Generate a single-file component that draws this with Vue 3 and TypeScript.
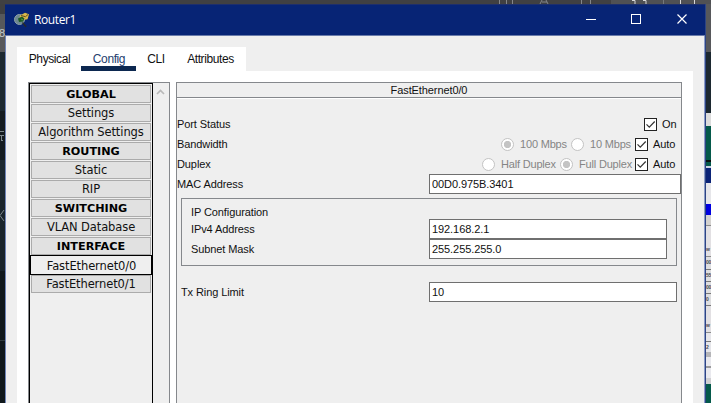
<script setup lang="ts">
import { ref } from 'vue'

interface MenuItem {
  label: string
  heading?: boolean
}

interface Block {
  h: number
  color: string
  text?: string
  icon?: string
}

const tabs: string[] = ['Physical', 'Config', 'CLI', 'Attributes']
const activeTab = ref('Config')

const menu: MenuItem[] = [
  { label: 'GLOBAL', heading: true },
  { label: 'Settings' },
  { label: 'Algorithm Settings' },
  { label: 'ROUTING', heading: true },
  { label: 'Static' },
  { label: 'RIP' },
  { label: 'SWITCHING', heading: true },
  { label: 'VLAN Database' },
  { label: 'INTERFACE', heading: true },
  { label: 'FastEthernet0/0' },
  { label: 'FastEthernet0/1' },
]
const selected = ref('FastEthernet0/0')

const mac = ref('00D0.975B.3401')
const ipv4 = ref('192.168.2.1')
const mask = ref('255.255.255.0')
const txRing = ref('10')

const leftBlocks: Block[] = [
  { h: 10, color: '#3f3f41' },
  { h: 38, color: '#57585b', text: '8' },
  { h: 59, color: '#1c2830' },
  { h: 49, color: '#141b20', icon: 'M0 20.5H4M0 24.500H4M1 29.500H3M1.500 25V29' },
  { h: 40, color: '#1c2830' },
  { h: 71, color: '#19242b', icon: 'M4 10L0 15.500L4 21' },
  { h: 69, color: '#10181c' },
  { h: 1, color: '#303a3e' },
  { h: 62, color: '#10181c' },
]

const rightBlocks: Block[] = [
  { h: 48, color: '#57585b' },
  { h: 61, color: '#1c2830' },
  { h: 13, color: '#dcdcdc' },
  { h: 34, color: '#04594a' },
  { h: 2, color: '#06100e' },
  { h: 4, color: '#04594a' },
  { h: 2, color: '#c9d3e4' },
  { h: 15, color: '#0b2377' },
  { h: 21, color: '#e6e6ea' },
  { h: 11, color: '#0000e0' },
  { h: 10, color: '#d4d2d0' },
  { h: 1, color: '#8b8b8b' },
  { h: 18, color: '#e2e0e3' },
  { h: 12, color: '#e2e0e3', text: 'w' },
  { h: 1, color: '#8b8b8b' },
  { h: 12, color: '#dedee0', text: '00' },
  { h: 1, color: '#777' },
  { h: 11, color: '#dedee0', text: '55' },
  { h: 1, color: '#777' },
  { h: 11, color: '#dedee0', text: '00' },
  { h: 1, color: '#777' },
  { h: 11, color: '#dedee0', text: '0' },
  { h: 1, color: '#777' },
  { h: 14, color: '#e2e0e3' },
  { h: 12, color: '#e2e0e3', text: 'w' },
  { h: 1, color: '#8b8b8b' },
  { h: 8, color: '#e6e6ea' },
  { h: 1, color: '#777' },
  { h: 10, color: '#e6e6ea', text: '2' },
  { h: 5, color: '#b5b5b8' },
  { h: 9, color: '#e9e9ee' },
  { h: 2, color: '#9a9a9c' },
  { h: 10, color: '#e9e9ee' },
  { h: 6, color: '#cfcfd2' },
  { h: 30, color: '#04594a' },
]
</script>

<template>
  <div class="desktop">
    <div class="topstrip">
      <svg width="711" height="4" viewBox="0 0 711 4">
        <rect x="611" y="0" width="100" height="4" fill="#505154" />
        <path d="M499.5 0V4M506.5 0V4M512.5 0V4M540 4l2-4M548 4l-2-4M542 2h5M581.500 0V4M590.500 0V4" stroke="#85878a" fill="none" />
        <path d="M632 .5h3v3.500M643 .5h3v3.500M680.500 0V4M694.500 0V4" stroke="#d8d8d8" fill="none" />
        <path d="M663.500 0V4" stroke="#77797c" />
      </svg>
    </div>
    <div class="middle">
      <div class="strip left">
        <div v-for="(b, i) in leftBlocks" :key="i" class="block" :style="{ height: b.h + 'px', background: b.color }">
          <svg v-if="b.icon" width="5" height="40" viewBox="0 0 5 40"><path :d="b.icon" fill="none" stroke="#7d878c" /></svg>
          <span v-else-if="b.text">{{ b.text }}</span>
        </div>
      </div>

      <div class="window">
        <header class="titlebar">
          <svg class="logo" width="17" height="16" viewBox="0 0 17 16">
            <circle cx="6.500" cy="7.500" r="5" fill="#6d8790" stroke="#8fa3a8" />
            <path d="M7 3.500 12 .8l4 1.400-1.500 5L10 8 6.500 5.500z" fill="#d9b84a" />
            <path d="M8 3.500l4.500 1.200L15 2.500" fill="none" stroke="#5e4a1c" />
            <path d="M5 6.500l4-2 2.500 2-1.500 3L6 10z" fill="#1c5a24" />
            <path d="M8 6.500l2 .8-1 1.500z" fill="#63a540" />
            <path d="M9.500 10.500l3.500 4.300" stroke="#252a2c" stroke-width="1.600" />
          </svg>
          <span class="title">Router1</span>
          <svg class="controls" width="110" height="31" viewBox="0 0 110 31" shape-rendering="crispEdges">
            <path d="M5 14.500h10M50.500 9.500h9v9h-9z" fill="none" stroke="#fff" />
            <path d="M96.500 9.500l9 9M105.500 9.500l-9 9" stroke="#fff" stroke-width="1.200" shape-rendering="auto" />
          </svg>
        </header>

        <div class="body">
          <nav class="tabs">
            <button v-for="t in tabs" :key="t" :class="['tab', t.toLowerCase(), { active: t === activeTab }]" @click="activeTab = t">
              <span>{{ t }}</span>
            </button>
          </nav>

          <main class="content">
            <aside class="sidebar">
              <div class="menu">
                <button
                  v-for="m in menu"
                  :key="m.label"
                  :class="['item', { heading: m.heading, selected: m.label === selected }]"
                  @click="selected = m.label"
                >{{ m.label }}</button>
              </div>
              <div class="scroll">
                <svg width="9" height="6" viewBox="0 0 9 6"><path d="M1 5l3.500-3.500L8 5" fill="none" stroke="#b9b9b9" stroke-width="1.700" /></svg>
              </div>
            </aside>

            <section class="panel">
              <h1 class="heading-bar">FastEthernet0/0</h1>
              <div class="rows">
                <div class="row">
                  <label>Port Status</label>
                  <div class="opts">
                    <i class="check"><svg width="11" height="11" viewBox="0 0 11 11"><path d="M1.500 5.300l2.800 2.900L9.700 2.500" /></svg></i>
                    <span class="on">On</span>
                  </div>
                </div>
                <div class="row">
                  <label>Bandwidth</label>
                  <div class="opts">
                    <i class="radio picked"></i><span class="off mbps100">100 Mbps</span>
                    <i class="radio"></i><span class="off mbps10">10 Mbps</span>
                    <i class="check"><svg width="11" height="11" viewBox="0 0 11 11"><path d="M1.500 5.300l2.800 2.900L9.700 2.500" /></svg></i>
                    <span class="auto">Auto</span>
                  </div>
                </div>
                <div class="row">
                  <label>Duplex</label>
                  <div class="opts">
                    <i class="radio"></i><span class="off half">Half Duplex</span>
                    <i class="radio picked"></i><span class="off full">Full Duplex</span>
                    <i class="check"><svg width="11" height="11" viewBox="0 0 11 11"><path d="M1.500 5.300l2.800 2.900L9.700 2.500" /></svg></i>
                    <span class="auto">Auto</span>
                  </div>
                </div>
                <div class="row mac">
                  <label>MAC Address</label>
                  <input v-model="mac" class="field" />
                </div>
              </div>

              <div class="group">
                <div class="legend">IP Configuration</div>
                <div class="row">
                  <label>IPv4 Address</label>
                  <input v-model="ipv4" class="field" />
                </div>
                <div class="row">
                  <label>Subnet Mask</label>
                  <input v-model="mask" class="field" />
                </div>
              </div>

              <div class="row tx">
                <label>Tx Ring Limit</label>
                <input v-model="txRing" class="field" />
              </div>
            </section>
          </main>
        </div>
      </div>

      <div class="strip right">
        <div v-for="(b, i) in rightBlocks" :key="i" class="block" :style="{ height: b.h + 'px', background: b.color }">{{ b.text }}</div>
      </div>
    </div>
  </div>
</template>

<style>
body {
  overflow: hidden;
}
</style>

<style scoped>
* {
  box-sizing: border-box;
}
.desktop {
  width: 711px;
  height: 403px;
  overflow: hidden;
  display: flex;
  flex-direction: column;
  font-family: "Liberation Sans", Arial, sans-serif;
  font-size: 11px;
  letter-spacing: -0.1px;
  color: #111;
}
.topstrip {
  height: 4px;
  background: #404042;
  display: flex;
}
.middle {
  flex: 1;
  display: flex;
  min-height: 0;
}
.strip {
  width: 5px;
  overflow: hidden;
  flex: none;
}
.block {
  overflow: hidden;
  white-space: nowrap;
}
.left .block {
  font-size: 11px;
  line-height: 38px;
  color: #c4c8ca;
  display: flex;
  justify-content: flex-end;
}
.right .block {
  font-size: 5px;
  font-weight: bold;
  line-height: 10px;
  letter-spacing: -0.3px;
  color: #4a4a4e;
}
.window {
  width: 701px;
  display: flex;
  flex-direction: column;
  border-right: 1px solid #2d4484;
}
.titlebar {
  height: 32px;
  background: #072475;
  border-top: 1px solid #1e2f6c;
  border-bottom: 1px solid #6a7cab;
  display: flex;
  align-items: center;
  color: #fff;
}
.logo {
  margin-left: 8px;
}
.title {
  margin-left: 4px;
  padding-bottom: 2px;
  flex: 1;
  font: 12px "Open Sans", "Noto Sans", sans-serif;
  letter-spacing: -0.4px;
}
.controls {
  margin-right: 14px;
}
.body {
  flex: 1;
  min-height: 0;
  background: #efefef;
  border-left: 1px solid #6f85b8;
  border-right: 1px solid #8b9cc6;
  padding: 11px 11px 0;
  display: flex;
  flex-direction: column;
}
button {
  font: inherit;
  color: inherit;
  border: 0;
  margin: 0;
  padding: 0;
}
.tabs {
  width: 229px;
  height: 24px;
  background: #fff;
  display: flex;
}
.tab {
  height: 24px;
  background: #fff;
  font-size: 12px;
  display: flex;
  justify-content: center;
  align-items: center;
  border-bottom: 5px solid #fff;
  padding: 5px 0 0 1px;
  letter-spacing: -0.4px;
  white-space: nowrap;
}
.physical { width: 64px; }
.config { width: 55px; }
.cli { width: 39px; }
.attributes { width: 70px; }
.tab.active {
  border-color: #0c2850;
  color: #24406e;
}
.content {
  flex: 1;
  min-height: 0;
  background: #fff;
  padding: 11px 11px 0;
  display: flex;
  gap: 6px;
}
.sidebar {
  width: 142px;
  border: 1px solid #85888c;
  border-bottom: 0;
  background: #efefef;
  display: flex;
}
.menu {
  width: 124px;
  border: 1px solid #000;
  border-bottom: 0;
  padding: 1px 1px 0;
  display: flex;
  flex-direction: column;
  gap: 1px;
}
.item {
  height: 18px;
  flex: none;
  border: 1px solid #ababab;
  background: #e1e1e1;
  font-family: "DejaVu Sans", Verdana, sans-serif;
  font-size: 11.5px;
  letter-spacing: -0.1px;
  line-height: 17px;
  text-align: center;
  white-space: nowrap;
}
.item.heading {
  font-weight: bold;
  font-size: 11.2px;
  letter-spacing: 0;
  color: #000;
}
.item.selected {
  height: 20px;
  margin: -1px;
  border-color: #000;
  background: #efefef;
  line-height: 20px;
  padding-left: 1px;
}
.scroll {
  flex: 1;
  display: flex;
  justify-content: center;
  padding: 6px 1px 0 0;
}
.panel {
  width: 506px;
  border: 1px solid #85888c;
  border-bottom: 0;
  background: #efefef;
}
.heading-bar {
  margin: 0;
  height: 15px;
  font-size: 11px;
  font-weight: normal;
  line-height: 14px;
  text-align: center;
  border-bottom: 1px solid #85888c;
  box-shadow: 0 1px #fff;
}
.rows {
  padding-top: 16px;
}
.row {
  height: 20px;
  display: flex;
  align-items: center;
  justify-content: space-between;
}
.opts {
  display: flex;
  align-items: center;
  white-space: nowrap;
}
.check {
  width: 13px;
  height: 13px;
  border: 1px solid #222;
  background: #fff;
  display: flex;
}
.check path {
  fill: none;
  stroke: #333;
  stroke-width: 1.2;
}
.radio {
  width: 13px;
  height: 13px;
  border: 1px solid #c3c3c3;
  border-radius: 50%;
  background: #fff;
}
.radio.picked {
  background: radial-gradient(circle, #c4c4c4 0 3.300px, #fff 4px);
}
.off {
  color: #858585;
  padding-left: 6px;
  letter-spacing: -0.18px;
}
.mbps100 { width: 57px; }
.mbps10 { width: 51px; }
.half { width: 65px; }
.full { width: 62px; }
.on {
  width: 24px;
  padding-left: 5px;
}
.auto {
  width: 33px;
  padding-left: 5px;
}
.field {
  height: 20px;
  width: 252px;
  border: 1px solid #6f6f6f;
  background: #fff;
  border-radius: 0;
  padding: 0 2px;
  margin: 0;
  outline: 0;
  font: 11px "Liberation Sans", Arial, sans-serif;
  letter-spacing: -0.08px;
  color: #111;
}
.group {
  margin: 4px 4px 0;
  height: 68px;
  border: 1px solid #85888c;
  padding: 7px 9px 0;
}
.legend {
  height: 13px;
  line-height: 12px;
}
.group .field {
  width: 238px;
}
.tx {
  margin: 16px 4px 0;
}
.tx .field {
  width: 248px;
}
</style>
